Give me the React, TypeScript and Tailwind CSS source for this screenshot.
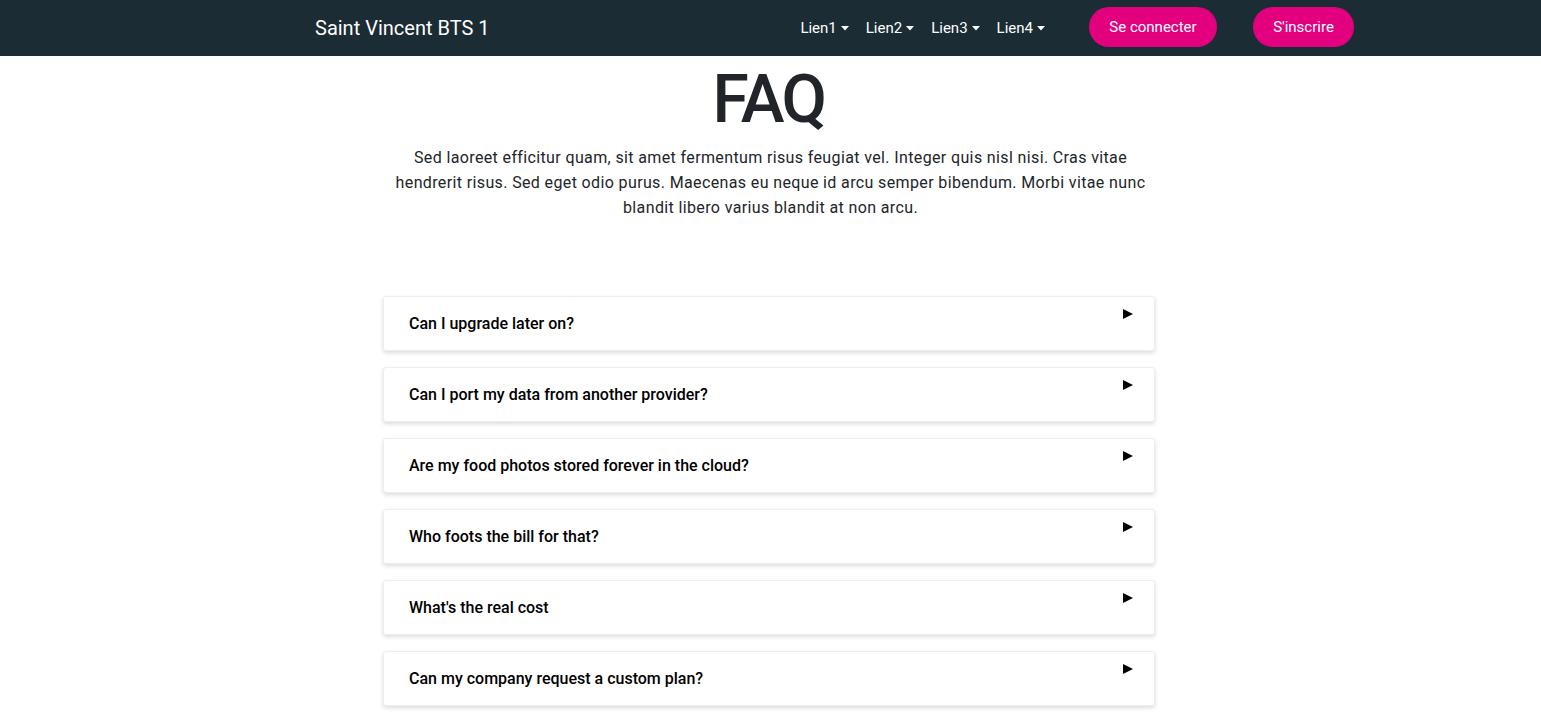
import React from 'react'

const questions = [
  'Can I upgrade later on?',
  'Can I port my data from another provider?',
  'Are my food photos stored forever in the cloud?',
  'Who foots the bill for that?',
  "What's the real cost",
  'Can my company request a custom plan?',
]

function Caret() {
  return (
    <svg width="8" height="5" viewBox="0 0 8 5" className="ml-[4px]">
      <path d="M0 0 L8 0 L4 4.5 Z" fill="white" />
    </svg>
  )
}

export default function App() {
  return (
    <div className="min-h-screen bg-white font-['Roboto',sans-serif] text-[#212529]">
      {/* Navbar */}
      <nav className="h-14 bg-[#1b2c35] flex items-center justify-between pl-[315px] pr-[187px]">
        <span className="text-white text-[20px] leading-none">Saint Vincent BTS 1</span>
        <div className="flex items-center">
          <ul className="flex items-center gap-[17px] text-white text-[15px]">
            {['Lien1', 'Lien2', 'Lien3', 'Lien4'].map((l) => (
              <li key={l} className="flex items-center">
                {l}
                <Caret />
              </li>
            ))}
          </ul>
          <button className="ml-[44px] h-10 w-[128px] rounded-full bg-[#e2007f] text-white text-[15px] -mt-[2px]">
            Se connecter
          </button>
          <button className="ml-[36px] h-10 w-[101px] rounded-full bg-[#e2007f] text-white text-[15px] -mt-[2px]">
            S'inscrire
          </button>
        </div>
      </nav>

      {/* Header */}
      <div className="flex flex-col items-center">
        <h1 className="mt-1 text-[66px] leading-[79px] font-medium tracking-[-2.5px] ml-[-4px]">FAQ</h1>
        <p className="mt-[6px] w-[772px] text-center text-[16px] leading-[25px] tracking-[0.37px] text-[#212529]">
          Sed laoreet efficitur quam, sit amet fermentum risus feugiat vel. Integer quis nisl nisi. Cras vitae
          hendrerit risus. Sed eget odio purus. Maecenas eu neque id arcu semper bibendum. Morbi vitae nunc
          blandit libero varius blandit at non arcu.
        </p>

        {/* Questions */}
        <div className="mt-[76px] w-[772px] ml-[-3px] flex flex-col gap-4 pb-4">
          {questions.map((q) => (
            <div
              key={q}
              className="h-[55px] flex justify-between bg-white border border-[#eeeeee] rounded-[3px] shadow-[0_2px_4px_rgba(0,0,0,0.14)] pl-[25px] pr-[21px]"
            >
              <span className="self-center text-[16px] font-medium text-black">{q}</span>
              <svg width="10" height="10" viewBox="0 0 10 10" className="mt-[12px]">
                <path d="M0 0 L10 5 L0 10 Z" fill="black" />
              </svg>
            </div>
          ))}
        </div>
      </div>
    </div>
  )
}
